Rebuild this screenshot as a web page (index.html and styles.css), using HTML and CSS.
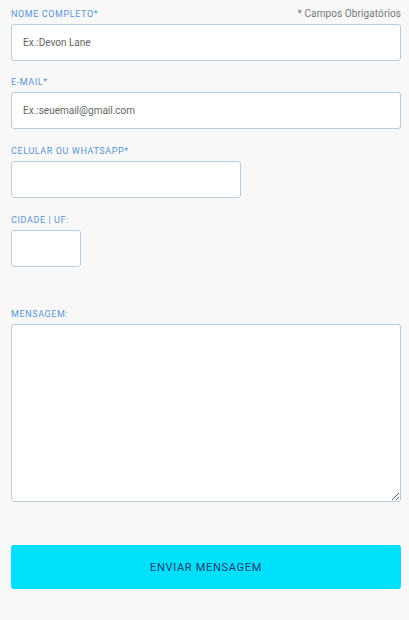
FILE: index.html
```html
<!DOCTYPE html>
<html lang="pt-BR">
<head>
<meta charset="utf-8">
<title>Contato</title>
<link rel="stylesheet" href="styles.css">
</head>
<body>
<form class="form">
  <div class="field field-first">
    <div class="label-row">
      <label class="label" for="nome">NOME COMPLETO*</label>
      <span class="required-note">* Campos Obrigatórios</span>
    </div>
    <input class="input input-full" id="nome" type="text" placeholder="Ex.:Devon Lane">
  </div>
  <div class="field">
    <label class="label" for="email">E-MAIL*</label>
    <input class="input input-full" id="email" type="text" placeholder="Ex.:seuemail@gmail.com">
  </div>
  <div class="field">
    <label class="label" for="cel">CELULAR OU WHATSAPP*</label>
    <input class="input input-mid" id="cel" type="text">
  </div>
  <div class="field">
    <label class="label" for="uf">CIDADE | UF:</label>
    <input class="input input-small" id="uf" type="text">
  </div>
  <div class="field field-msg">
    <label class="label" for="msg">MENSAGEM:</label>
    <textarea class="input textarea" id="msg"></textarea>
  </div>
  <button class="submit" type="button">ENVIAR MENSAGEM</button>
</form>
</body>
</html>
```
FILE: styles.css
```css
html, body {
  margin: 0;
  padding: 0;
  background: #f8f8f8;
  font-family: Roboto, "Noto Sans", sans-serif;
}
.form {
  display: flex;
  flex-direction: column;
  padding: 8px 8px 0 11px;
}
.field {
  display: flex;
  flex-direction: column;
  margin-bottom: 16px;
}
.field-first {
  margin-bottom: 15px;
}
.field-msg {
  margin-top: 25px;
  margin-bottom: 43px;
}
.label-row {
  display: flex;
  justify-content: space-between;
  align-items: baseline;
}
.label {
  font-size: 9px;
  line-height: 12px;
  letter-spacing: 0.6px;
  color: #5a94d6;
  margin-bottom: 4px;
}
.required-note {
  font-size: 10px;
  line-height: 12px;
  color: #777;
  letter-spacing: 0.1px;
}
.input {
  box-sizing: border-box;
  height: 37px;
  border: 1px solid #b9cde0;
  border-radius: 3px;
  background: #fff;
  padding: 0 11px;
  font-family: Roboto, "Noto Sans", sans-serif;
  font-size: 10px;
  color: #333;
  outline: none;
}
.input::placeholder {
  color: #666;
}
.input-full { width: 390px; }
.input-mid { width: 230px; }
.input-small { width: 70px; }
.textarea {
  height: 178px;
  width: 390px;
  resize: vertical;
  padding: 8px 11px;
}
.submit {
  width: 390px;
  height: 44px;
  border: none;
  border-radius: 3px;
  background: #00dffc;
  color: #24406e;
  font-family: Roboto, "Noto Sans", sans-serif;
  font-size: 11px;
  letter-spacing: 0.7px;
  cursor: pointer;
}
```
